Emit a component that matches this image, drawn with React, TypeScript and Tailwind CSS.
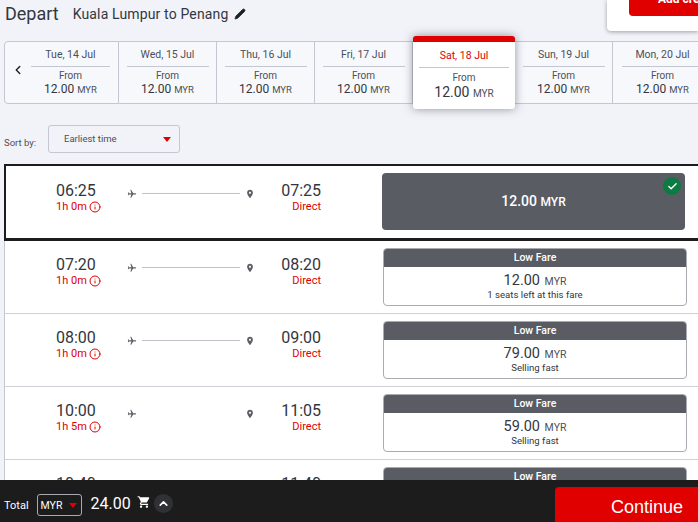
import { FC } from "react"
import { ChevronLeft, ChevronUp, Check, Pencil, Info } from "lucide-react"

const dates = ["Wed, 15 Jul", "Thu, 16 Jul", "Fri, 17 Jul"]

const flights = [
  { dep: "07:20", arr: "08:20", dur: "1h 0m", price: "12.00", note: "1 seats left at this fare", line: true },
  { dep: "08:00", arr: "09:00", dur: "1h 0m", price: "79.00", note: "Selling fast", line: true },
  { dep: "10:00", arr: "11:05", dur: "1h 5m", price: "59.00", note: "Selling fast", line: false },
  { dep: "10:40", arr: "11:40", dur: "1h 0m", price: "79.00", note: "Selling fast", line: true },
]

const Caret: FC = () => (
  <i className="block h-0 w-0 border-x-[4px] border-t-[5px] border-x-transparent border-t-[#e00000]" />
)

const DateBody: FC<{ label: string; width: string }> = ({ label, width }) => (
  <div className="flex h-full flex-col items-center">
    <div className={`flex h-[25px] items-center justify-center border-b border-[#c3c7d2] pt-px text-[10.5px] text-[#4b4f59] ${width}`}>{label}</div>
    <div className="mt-[3px] text-[10px] leading-[12px] text-[#4b4f59]">From</div>
    <div className="text-[12px] leading-[14px] text-[#333640]">12.00 <span className="text-[9.5px] text-[#4b4f59]">MYR</span></div>
  </div>
)

const DateCard: FC<{ label: string; last?: boolean }> = ({ label, last }) => (
  <div className={`flex h-[63px] shrink-0 justify-center border-y border-r border-[#c3c7d2] bg-[#f7f8fc] ${last ? "w-[100px]" : "w-[98px]"}`}>
    <DateBody label={label} width="w-[82px]" />
  </div>
)

const Route: FC<{ dep: string; arr: string; dur: string; line: boolean }> = ({ dep, arr, dur, line }) => (
  <div className="flex items-start">
    <div className="w-[64px] shrink-0">
      <div className="text-[16px] leading-[19px] text-[#333640]">{dep}</div>
      <div className="flex items-center gap-[2px] text-[11px] leading-[13px] text-[#e00000]">
        {dur}
        <Info size={12} strokeWidth={2} />
      </div>
    </div>
    <div className="flex h-[19px] w-[134px] shrink-0 items-center pt-[6px]">
      <svg viewBox="0 0 24 24" className="ml-[7px] h-[10px] w-[10px] shrink-0 rotate-90 fill-[#5c5f66]">
        <path d="M21 16v-2l-8-5V3.5c0-.83-.67-1.5-1.5-1.5S10 2.67 10 3.5V9l-8 5v2l8-2.5V19l-2 1.5V22l3.5-1 3.5 1v-1.5L13 19v-5.5l8 2.5z" />
      </svg>
      <div className={`ml-[5px] h-px w-[98px] shrink-0 ${line ? "bg-[#bfc2ca]" : "bg-transparent"}`} />
      <svg viewBox="0 0 24 24" className="ml-[5px] h-[10px] w-[10px] shrink-0 fill-[#5c5f66]">
        <path d="M12 2C8.13 2 5 5.13 5 9c0 5.25 7 13 7 13s7-7.75 7-13c0-3.87-3.13-7-7-7zm0 9.5c-1.38 0-2.5-1.12-2.5-2.5s1.12-2.5 2.5-2.5 2.5 1.12 2.5 2.5-1.12 2.5-2.5 2.5z" />
      </svg>
    </div>
    <div className="w-[67px] shrink-0 text-right">
      <div className="text-[16px] leading-[19px] text-[#333640]">{arr}</div>
      <div className="text-[11px] leading-[13px] text-[#e00000]">Direct</div>
    </div>
  </div>
)

export default function App() {
  return (
    <div className="relative h-[522px] w-[698px] overflow-hidden bg-[#f1f3f8] font-['Roboto',sans-serif]">
      <div className="absolute right-0 top-0 z-20 h-[31px] w-[91px] rounded-bl-[4px] bg-white shadow-[0_1px_4px_rgba(0,0,0,0.35)]">
        <div className="ml-[22px] h-[16px] overflow-hidden rounded-bl-[4px] bg-[#e00000] pl-[29px] text-[12px] font-bold leading-[14px] text-white">
          <div className="-mt-[8px] whitespace-nowrap">Add credit</div>
        </div>
      </div>

      <div className="flex h-[36px] items-center pb-[10px] pl-[5px] pt-[2px]">
        <h1 className="text-[18px] leading-[24px] text-[#333640]">Depart</h1>
        <span className="ml-[14px] text-[14px] tracking-[0.15px] text-[#333640]">Kuala Lumpur to Penang</span>
        <Pencil size={12} fill="#222" strokeWidth={1.5} className="ml-[6px] text-[#222]" />
      </div>

      <div className="flex h-[73px] items-center pl-[4px]">
        <div className="flex h-[63px] w-[115px] shrink-0 rounded-l-[4px] border border-l border-[#c3c7d2] bg-[#f7f8fc]">
          <div className="flex w-[26px] shrink-0 justify-center pt-[21px]"><ChevronLeft size={14} strokeWidth={2.5} className="text-[#222]" /></div>
          <DateBody label="Tue, 14 Jul" width="w-[79px]" />
        </div>
        {dates.map((d) => <DateCard key={d} label={d} />)}
        <div className="relative z-10 flex h-[73px] w-[102px] shrink-0 flex-col items-center overflow-hidden rounded-[3px] border-t-[6px] border-[#e00000] bg-white shadow-[0_0_10px_rgba(60,66,85,0.55)]">
          <div className="flex h-[26px] w-[90px] items-center justify-center border-b border-[#c3c7d2] pt-[2px] text-[10.5px] text-[#e00000]">Sat, 18 Jul</div>
          <div className="mt-[4px] text-[10px] leading-[12px] text-[#4b4f59]">From</div>
          <div className="text-[14px] leading-[17px] text-[#333640]">12.00 <span className="text-[10px] text-[#4b4f59]">MYR</span></div>
        </div>
        <DateCard label="Sun, 19 Jul" />
        <DateCard label="Mon, 20 Jul" last />
      </div>

      <div className="flex h-[55px] items-center pl-[4px] pt-[5px]">
        <span className="mt-[8px] w-[44px] text-[9.5px] text-[#4b4f59]">Sort by:</span>
        <div className="flex h-[28px] w-[132px] items-center justify-between rounded-[3px] border border-[#c3c7d2] pl-[15px] pr-[8px] text-[9.5px] text-[#4b4f59]">
          Earliest time
          <Caret />
        </div>
      </div>

      <div className="ml-[4px] border-l border-[#c3c7d2] bg-white">
        <div className="-ml-px flex h-[77px] items-start border-x-2 border-b-[3px] border-t-2 border-[#1c1c1c] border-r-0 pl-[50px] pt-[15px]">
          <Route dep="06:25" arr="07:25" dur="1h 0m" line />
          <div className="relative -mt-[8px] ml-[61px] flex h-[57px] w-[303px] items-center justify-center rounded-[4px] bg-[#5a5c63] text-[14px] font-medium text-white">
            <span>12.00 <span className="text-[12px]">MYR</span></span>
            <div className="absolute right-[4px] top-[4px] flex h-[18px] w-[18px] items-center justify-center rounded-full bg-[#0b7a43]">
              <Check size={11} strokeWidth={3} />
            </div>
          </div>
        </div>
        {flights.map((f) => (
          <div key={f.dep} className="flex h-[73px] items-start border-b border-[#cfd1d6] pl-[51px] pt-[14px]">
            <Route dep={f.dep} arr={f.arr} dur={f.dur} line={f.line} />
            <div className="-mt-[7px] ml-[62px] h-[58px] w-[304px] overflow-hidden rounded-[4px] border border-[#a9abb0]">
              <div className="-mt-px flex h-[19px] items-center justify-center bg-[#5a5c63] text-[10.5px] font-medium text-white">Low Fare</div>
              <div className="flex flex-col items-center">
                <div className="mt-[6px] text-[14.5px] leading-[16px] text-[#333640]">{f.price} <span className="ml-px text-[10.5px] text-[#4b4f59]">MYR</span></div>
                <div className="-mt-px text-[9.6px] leading-[11px] text-[#333640]">{f.note}</div>
              </div>
            </div>
          </div>
        ))}
      </div>

      <div className="absolute bottom-0 left-0 right-0 z-30 flex h-[42px] items-start justify-between bg-[#1c1c1c]">
        <div className="flex items-center pl-[4px] pt-[14px]">
          <span className="mt-[2px] text-[11px] text-white">Total</span>
          <div className="ml-[8px] flex h-[22px] w-[45px] items-center justify-between rounded-[3px] border border-[#a9abb0] pl-[3px] pr-[4px] pt-px text-[10.5px] text-white">
            MYR
            <Caret />
          </div>
          <span className="-mt-[3px] ml-[9px] text-[16px] leading-[22px] text-white">24.00</span>
          <svg viewBox="0 0 24 24" className="-mt-[7px] ml-[6px] h-[14px] w-[14px] fill-white">
            <path d="M7 18c-1.1 0-1.99.9-1.99 2S5.9 22 7 22s2-.9 2-2-.9-2-2-2zM1 2v2h2l3.6 7.59-1.35 2.45c-.16.28-.25.61-.25.96 0 1.1.9 2 2 2h12v-2H7.42c-.14 0-.25-.11-.25-.25l.03-.12.9-1.63h7.45c.75 0 1.41-.41 1.75-1.03l3.58-6.49c.08-.14.12-.31.12-.48 0-.55-.45-1-1-1H5.21l-.94-2H1zm16 16c-1.1 0-1.99.9-1.99 2s.89 2 1.99 2 2-.9 2-2-.9-2-2-2z" />
          </svg>
          <div className="-mt-[4px] ml-[3px] flex h-[19px] w-[19px] items-center justify-center rounded-full bg-[#303134]">
            <ChevronUp size={13} strokeWidth={3} className="text-white" />
          </div>
        </div>
        <div className="mt-[7px] flex h-[35px] w-[143px] items-center justify-end rounded-tl-[4px] bg-[#e00000] pr-[15px] pt-[5px] font-['Liberation_Sans',sans-serif] text-[18px] text-white">Continue</div>
      </div>
    </div>
  )
}
